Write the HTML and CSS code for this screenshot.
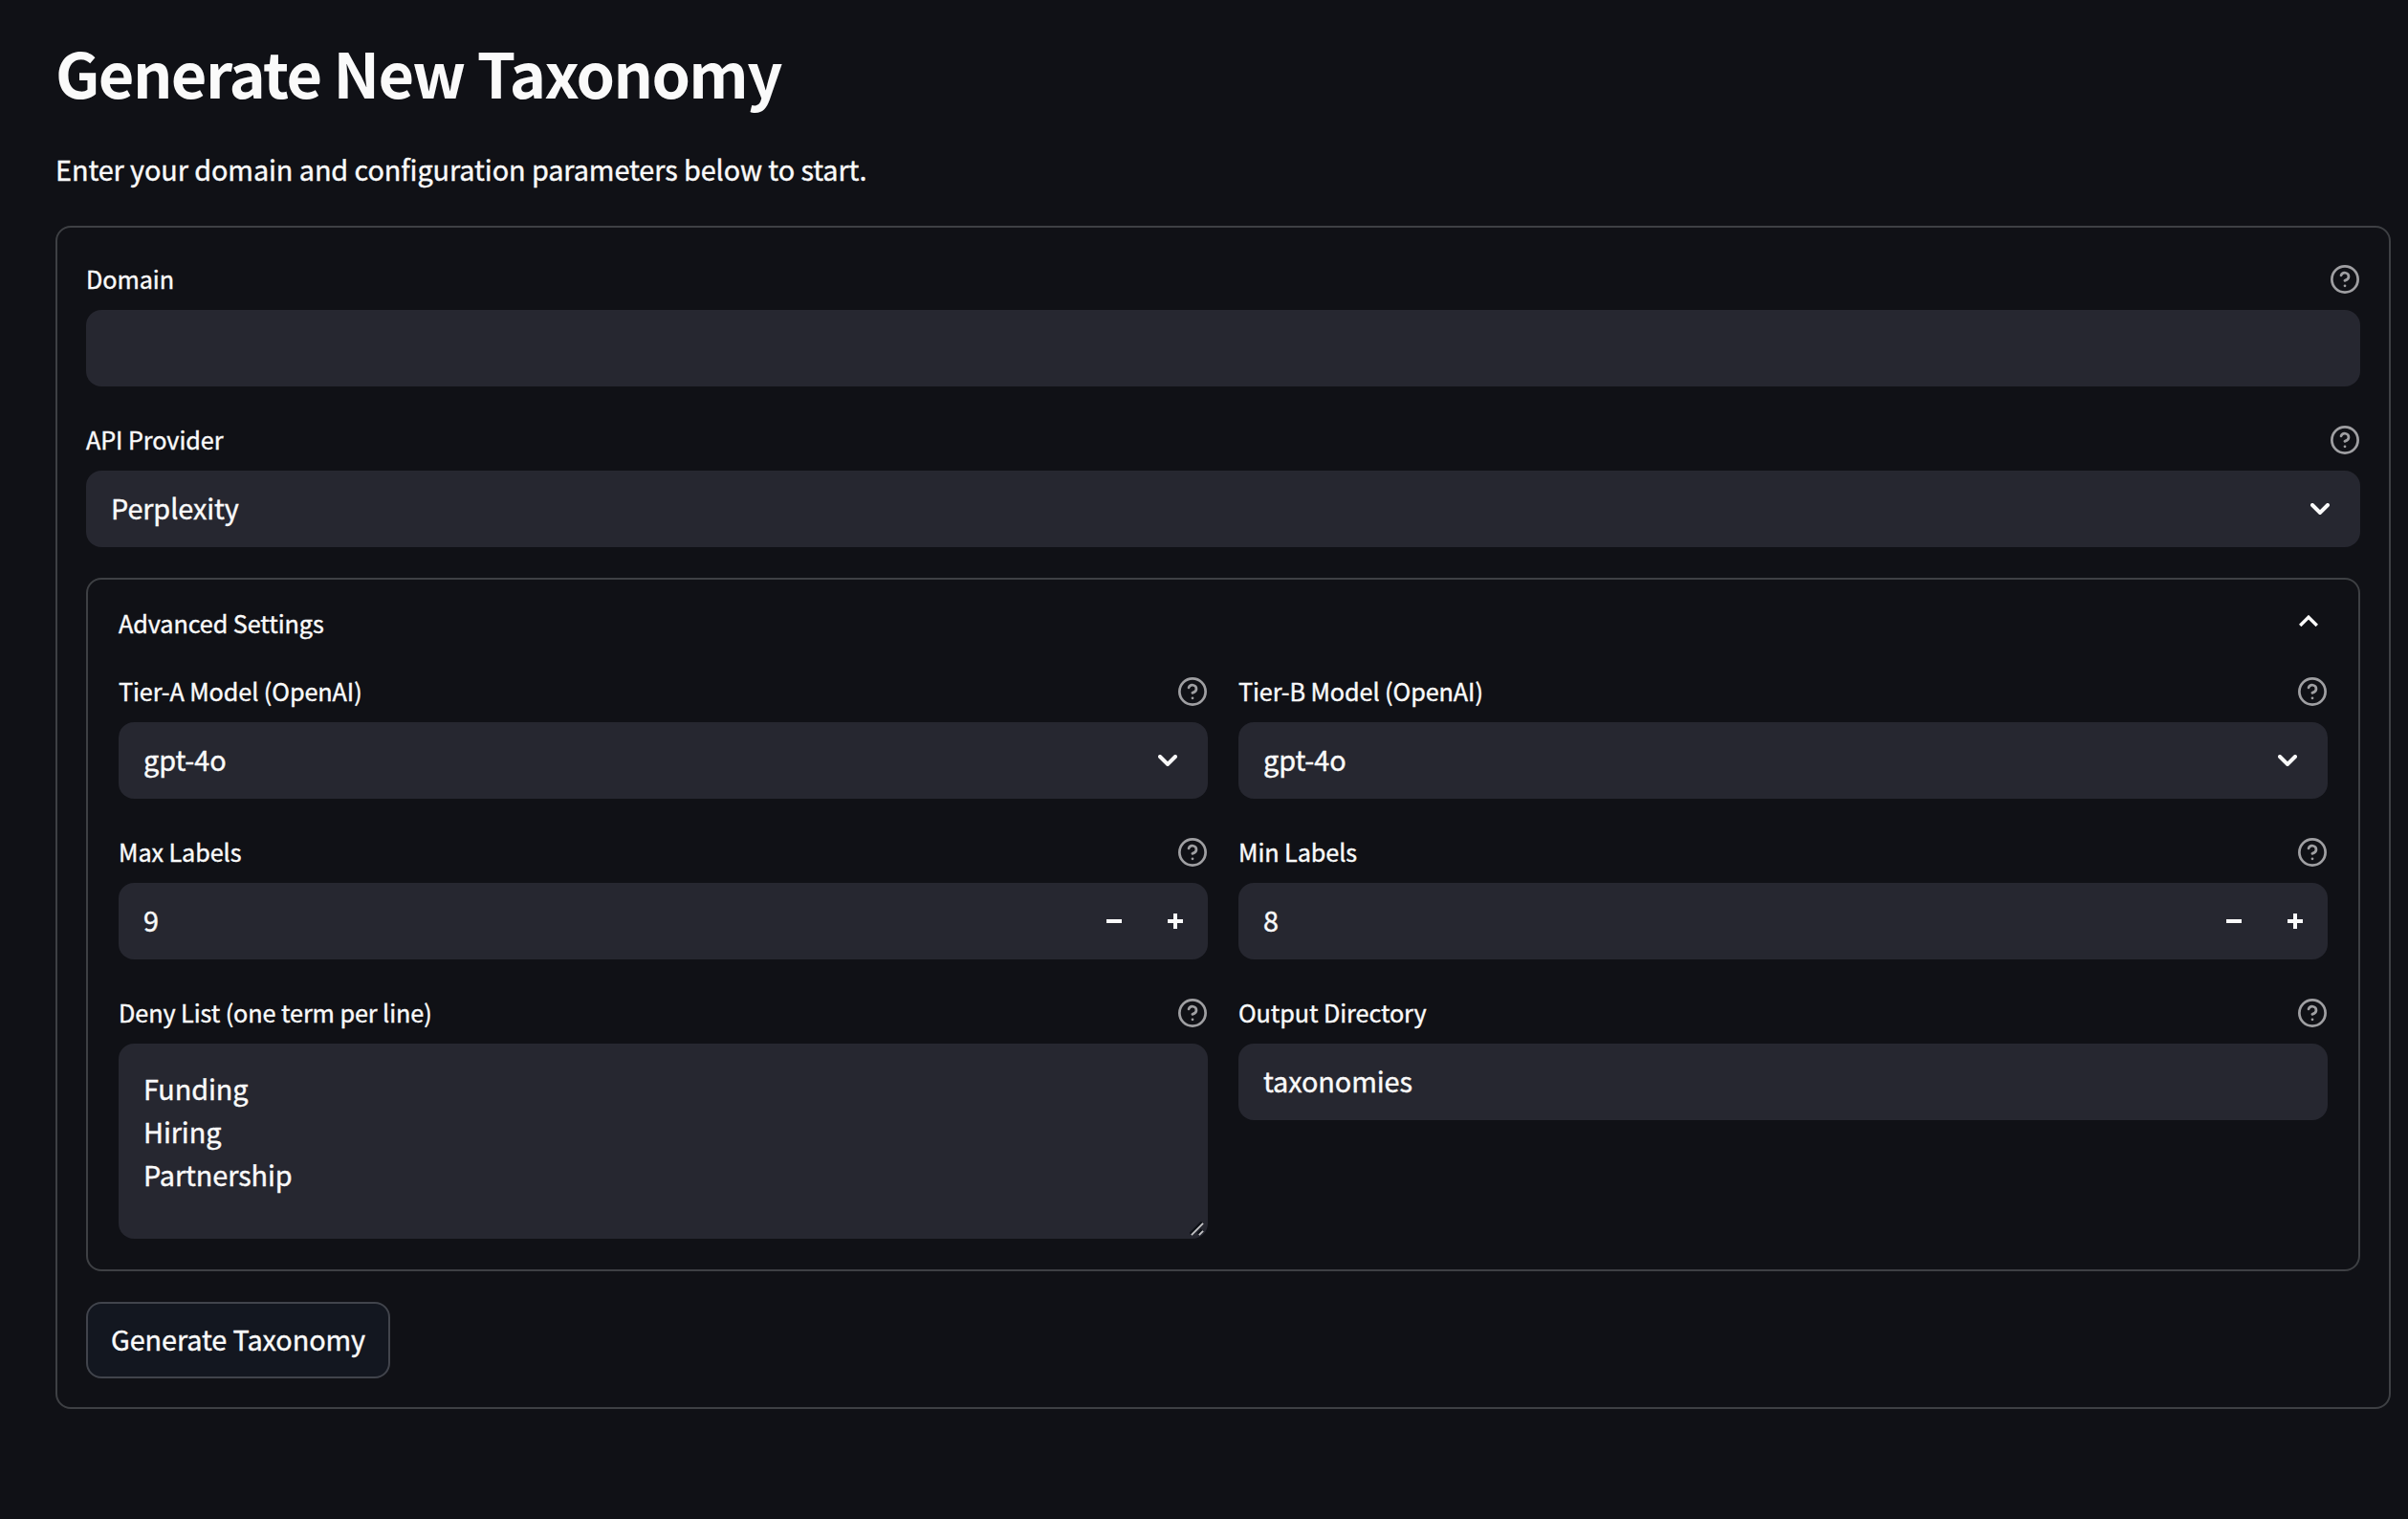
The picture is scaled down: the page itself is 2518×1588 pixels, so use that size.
FILE: index.html
```html
<!DOCTYPE html>
<html lang="en">
<head>
<meta charset="utf-8">
<title>Generate New Taxonomy</title>
<link rel="stylesheet" href="styles.css">
</head>
<body>
<svg class="sprite" aria-hidden="true">
  <symbol id="help" viewBox="1 1 22 22"><g fill="none" stroke="currentColor" stroke-width="2" stroke-linecap="round" stroke-linejoin="round"><circle cx="12" cy="12" r="10"/><path d="M9.09 9a3 3 0 0 1 5.83 1c0 2-3 3-3 3"/><path d="M12 17h.01"/></g></symbol>
  <symbol id="down" viewBox="0 0 20 12"><path d="M2 2l8 8 8-8" fill="none" stroke="currentColor" stroke-width="4" stroke-linecap="round" stroke-linejoin="miter"/></symbol>
  <symbol id="up" viewBox="0 0 20 12"><path d="M1.2 11L10 2.2 18.800 11" fill="none" stroke="currentColor" stroke-width="3.4"/></symbol>
</svg>
<main class="page">
  <h1 class="title">Generate New Taxonomy</h1>
  <p class="intro">Enter your domain and configuration parameters below to start.</p>
  <form class="form">
    <div class="field">
      <div class="label"><span>Domain</span><svg class="help"><use href="#help"/></svg></div>
      <div class="control"></div>
    </div>
    <div class="field">
      <div class="label"><span>API Provider</span><svg class="help"><use href="#help"/></svg></div>
      <div class="control"><span>Perplexity</span><svg class="arrow"><use href="#down"/></svg></div>
    </div>
    <section class="expander">
      <div class="summary"><span>Advanced Settings</span><svg class="arrow arrow-up"><use href="#up"/></svg></div>
      <div class="grid">
        <div class="field">
          <div class="label"><span>Tier-A Model (OpenAI)</span><svg class="help"><use href="#help"/></svg></div>
          <div class="control"><span>gpt-4o</span><svg class="arrow"><use href="#down"/></svg></div>
        </div>
        <div class="field">
          <div class="label"><span>Tier-B Model (OpenAI)</span><svg class="help"><use href="#help"/></svg></div>
          <div class="control"><span>gpt-4o</span><svg class="arrow"><use href="#down"/></svg></div>
        </div>
        <div class="field">
          <div class="label"><span>Max Labels</span><svg class="help"><use href="#help"/></svg></div>
          <div class="control"><span>9</span><svg class="steps" viewBox="0 0 80 16"><path d="M0 6h16v4H0zM64 6h16v4H64zM70 0h4v16h-4z" fill="currentColor"/></svg></div>
        </div>
        <div class="field">
          <div class="label"><span>Min Labels</span><svg class="help"><use href="#help"/></svg></div>
          <div class="control"><span>8</span><svg class="steps" viewBox="0 0 80 16"><path d="M0 6h16v4H0zM64 6h16v4H64zM70 0h4v16h-4z" fill="currentColor"/></svg></div>
        </div>
        <div class="field">
          <div class="label"><span>Deny List (one term per line)</span><svg class="help"><use href="#help"/></svg></div>
          <div class="control area"><span>Funding<br>Hiring<br>Partnership</span>
            <svg class="grip" viewBox="0 0 16 16"><path d="M1 14L14 1M9.500 14l4.500-4.500" stroke="#0e1117" stroke-width="4"/><path d="M2 15L15 2M10.500 15l4.500-4.500" stroke="#c4c4c6" stroke-width="2"/></svg></div>
        </div>
        <div class="field">
          <div class="label"><span>Output Directory</span><svg class="help"><use href="#help"/></svg></div>
          <div class="control"><span>taxonomies</span></div>
        </div>
      </div>
    </section>
    <button class="submit" type="button">Generate Taxonomy</button>
  </form>
</main>
</body>
</html>
```
FILE: styles.css
```css
* { box-sizing: border-box; }
body {
  margin: 0;
  min-height: 1588px;
  background: #101116;
  color: #fafafa;
  font-family: "Noto Sans CJK SC", "Noto Sans", sans-serif;
  font-size: 28.8px;
  letter-spacing: -0.075px;
  -webkit-text-stroke: 0.4px currentColor;
}
.sprite { position: absolute; width: 0; height: 0; }
.page { padding: 32px 18px 0 58px; }
.title {
  margin: 0 0 33px;
  font-size: 64.8px;
  line-height: 86px;
  font-weight: 700;
  letter-spacing: -1.6px;
  -webkit-text-stroke: 0;
}
.intro { margin: 0 0 34px; line-height: 51px; }
.form {
  display: flex;
  flex-direction: column;
  gap: 32px;
  padding: 30px;
  border: 2px solid #3e4044;
  border-radius: 16px;
}
.field { display: flex; flex-direction: column; gap: 8px; }
.label {
  display: flex;
  align-items: center;
  justify-content: space-between;
  height: 48px;
  padding-right: 1px;
  font-size: 25.2px;
  line-height: 40px;
}
.label span { padding-bottom: 2px; }
.help { width: 30px; height: 30px; color: #9f9fa2; }
.control {
  position: relative;
  display: flex;
  align-items: center;
  justify-content: space-between;
  height: 80px;
  padding: 0 26px;
  border-radius: 16px;
  background: #262730;
  line-height: 45px;
}
.control span { padding-bottom: 4px; }
.arrow { width: 20px; height: 12px; margin-right: 6px; }
.steps { width: 80px; height: 16px; }
.area { height: 204px; align-items: flex-start; padding-top: 24px; }
.grip { position: absolute; right: 4px; bottom: 3px; width: 15px; height: 15px; }
.expander { padding: 0 32px 32px; border: 2px solid #3e4044; border-radius: 16px; }
.summary {
  display: flex;
  align-items: center;
  justify-content: space-between;
  height: 93px;
  padding-bottom: 4px;
  font-size: 25.2px;
}
.arrow-up { margin: 0 10px 3px 0; }
.grid { display: grid; grid-template-columns: 1fr 1fr; gap: 32px; align-items: start; }
.submit {
  align-self: flex-start;
  width: 318px;
  height: 80px;
  padding: 0 0 4px;
  border: 2px solid #41444c;
  border-radius: 16px;
  background: #131720;
  color: inherit;
  font: inherit;
  letter-spacing: inherit;
  line-height: 51px;
}
```
